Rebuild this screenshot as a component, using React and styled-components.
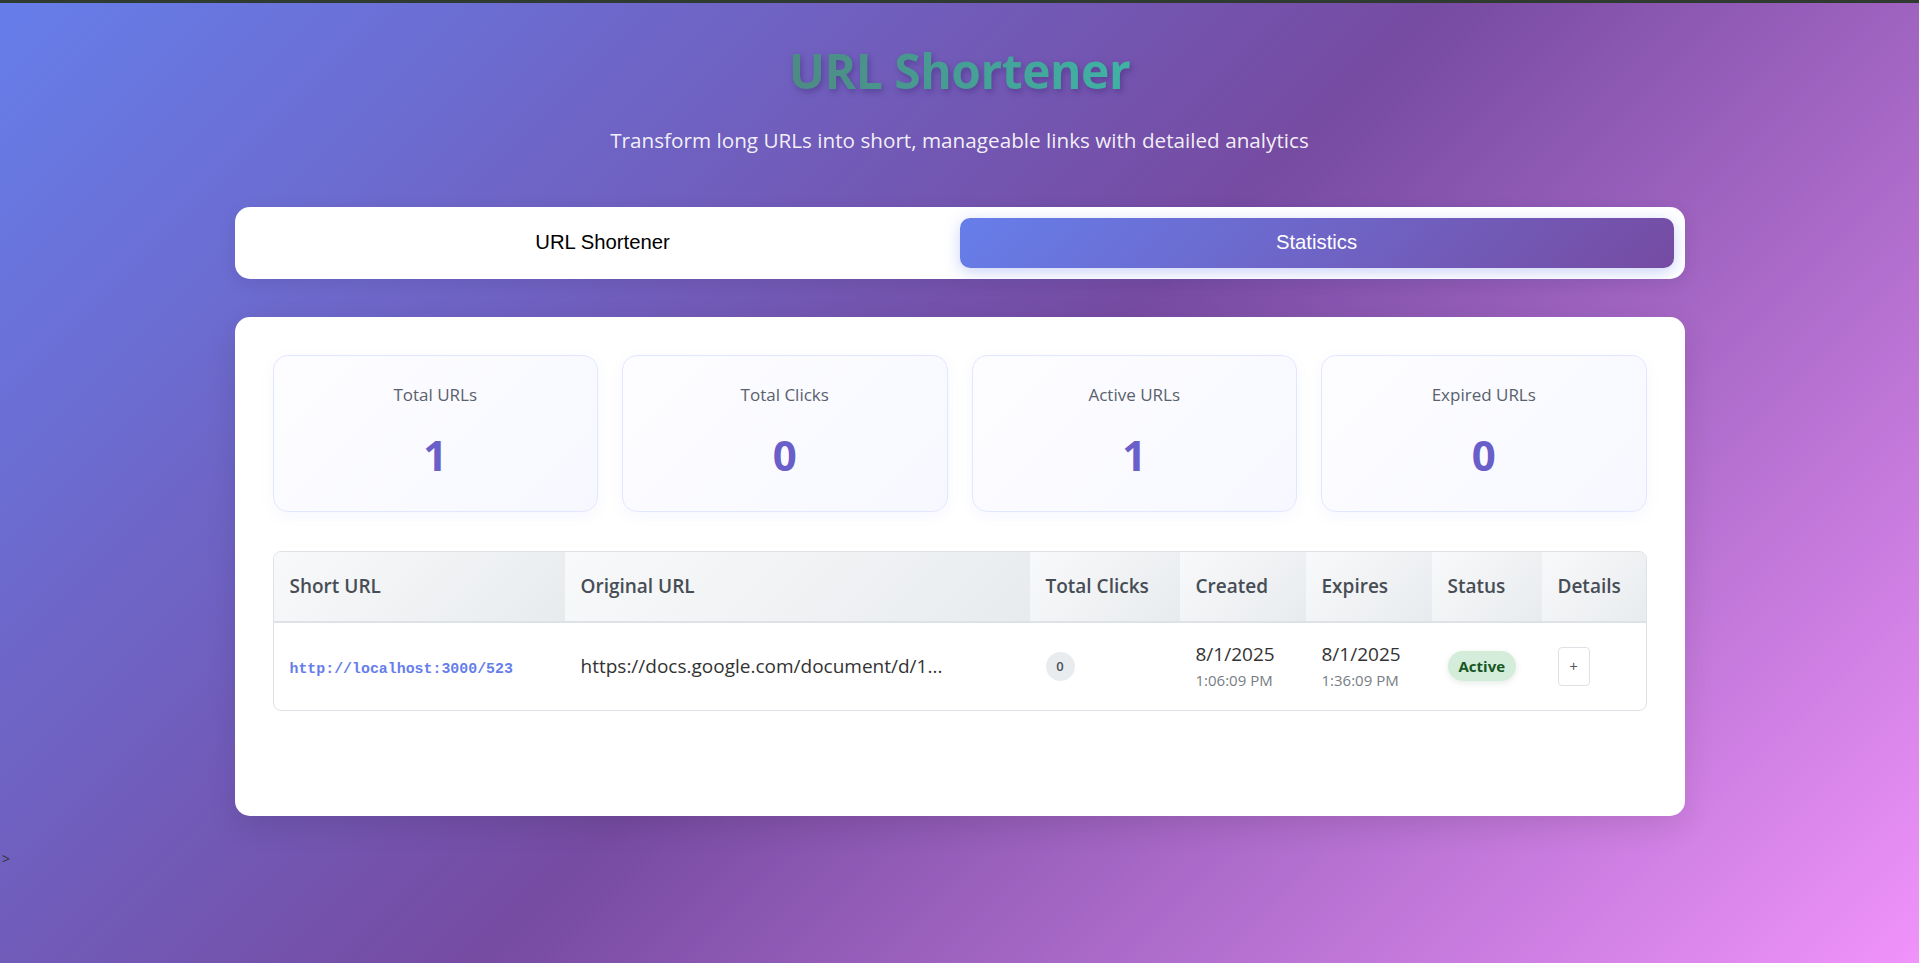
import React, { useState } from 'react';
import styled, { createGlobalStyle } from 'styled-components';

// 페이지 전체 기본 스타일
const GlobalStyle = createGlobalStyle`
  * { box-sizing: border-box; }
  html, body { margin: 0; padding: 0; }
  body {
    min-height: 100vh;
    font-family: "Open Sans", "Noto Sans", "Liberation Sans", sans-serif;
    background: linear-gradient(135deg, #667eea 0%, #764ba2 50%, #f093fb 100%);
    background-attachment: fixed;
  }
`;

const TopStrip = styled.div`
  height: 3px;
  background: #2f3a30;
`;

const Container = styled.div`
  max-width: 1450px;
  margin: 0 auto;
  padding: 39px 0 33px;
`;

const Header = styled.header`
  text-align: center;
  margin-bottom: 53px;
`;

const Title = styled.h1`
  margin: 0;
  font-size: 48px;
  font-weight: 700;
  line-height: 1.2;
  letter-spacing: -0.5px;
  background: linear-gradient(90deg, #4d8a84 0%, #3fb3a5 100%);
  -webkit-background-clip: text;
  background-clip: text;
  color: transparent;
  filter: drop-shadow(2px 3px 3px rgba(40, 20, 90, 0.35));
  display: inline-block;
`;

const Subtitle = styled.p`
  margin: 26px 0 0;
  font-size: 20.7px;
  color: rgba(255, 255, 255, 0.92);
`;

const Tabs = styled.div`
  display: flex;
  background: #fff;
  border-radius: 15px;
  padding: 11px;
  margin-bottom: 38px;
  box-shadow: 0 4px 18px rgba(0, 0, 0, 0.08);
`;

const TabButton = styled.button`
  flex: 1;
  height: 50px;
  border: none;
  border-radius: 10px;
  font-family: "Liberation Sans", Arial, sans-serif;
  font-size: 20.3px;
  cursor: pointer;
  color: ${p => (p.$active ? '#fff' : '#000')};
  background: ${p => (p.$active ? 'linear-gradient(135deg, #667eea 0%, #764ba2 100%)' : 'transparent')};
  box-shadow: ${p => (p.$active ? '0 4px 15px rgba(102, 126, 234, 0.35)' : 'none')};
`;

const Panel = styled.section`
  background: #fff;
  border-radius: 15px;
  padding: 38px;
  min-height: 499px;
  box-shadow: 0 10px 30px rgba(0, 0, 0, 0.1);
`;

const StatsGrid = styled.div`
  display: grid;
  grid-template-columns: repeat(4, 1fr);
  gap: 24px;
  margin-bottom: 39px;
`;

const StatCard = styled.div`
  height: 157px;
  padding: 26px 20px;
  text-align: center;
  border-radius: 15px;
  border: 1px solid #e3e6ff;
  background: linear-gradient(135deg, #fdfdff 0%, #f7f8ff 100%);
  box-shadow: 0 4px 15px rgba(102, 126, 234, 0.06);
`;

const StatLabel = styled.div`
  font-size: 17px;
  line-height: 26px;
  color: #59616d;
  margin-bottom: 20px;
`;

const StatValue = styled.div`
  font-size: 42px;
  line-height: 54px;
  font-weight: 700;
  color: #6a5ec9;
`;

const TableWrap = styled.div`
  border: 1px solid #dee2e6;
  border-radius: 8px;
  overflow: hidden;
`;

const Table = styled.table`
  width: 100%;
  border-collapse: collapse;
  table-layout: fixed;
`;

const Th = styled.th`
  width: ${p => p.$w}px;
  height: 70px;
  padding: 0 12px 0 16px;
  text-align: left;
  font-size: 19px;
  font-weight: 600;
  color: #474d55;
  background: linear-gradient(135deg, #f8f9fa 0%, #e8ebee 100%);
  border-bottom: 2px solid #dee2e6;
  white-space: nowrap;
`;

const Td = styled.td`
  height: 88px;
  padding: 0 12px 0 16px;
  vertical-align: middle;
  font-size: 19px;
  color: #333;
  white-space: nowrap;
  overflow: hidden;
`;

const ShortLink = styled.a`
  font-family: "Liberation Mono", "DejaVu Sans Mono", monospace;
  font-size: 14.9px;
  font-weight: 700;
  color: #667eea;
  text-decoration: none;
`;

const ClickBadge = styled.span`
  display: inline-flex;
  align-items: center;
  justify-content: center;
  width: 29px;
  height: 29px;
  border-radius: 50%;
  background: #e9ecef;
  color: #495057;
  font-size: 13px;
  font-weight: 600;
`;

const DateMain = styled.div`
  font-size: 19px;
  line-height: 28px;
  color: #333;
`;

const DateTime = styled.div`
  font-size: 15px;
  line-height: 24px;
  color: #777d84;
`;

const StatusBadge = styled.span`
  display: inline-block;
  padding: 5px 11px;
  border-radius: 16px;
  font-size: 15px;
  font-weight: 700;
  background: #d4edda;
  color: #155724;
  box-shadow: 0 2px 6px rgba(21, 87, 36, 0.12);
`;

const DetailButton = styled.button`
  width: 32px;
  height: 39px;
  border: 1px solid #dee2e6;
  border-radius: 4px;
  background: #fff;
  color: #555;
  font-size: 14px;
  cursor: pointer;
`;

const Stray = styled.div`
  padding-left: 2px;
  font-size: 14px;
  color: #333;
`;

const stats = [
  { label: 'Total URLs', value: 1 },
  { label: 'Total Clicks', value: 0 },
  { label: 'Active URLs', value: 1 },
  { label: 'Expired URLs', value: 0 },
];

const columns = [
  ['Short URL', 291],
  ['Original URL', 465],
  ['Total Clicks', 150],
  ['Created', 126],
  ['Expires', 126],
  ['Status', 110],
  ['Details', 106],
];

export default function App() {
  let [tab, setTab] = useState('stats');

  return (
    <>
      <GlobalStyle />
      <TopStrip />
      <Container>
        <Header>
          <Title>URL Shortener</Title>
          <Subtitle>Transform long URLs into short, manageable links with detailed analytics</Subtitle>
        </Header>

        <Tabs>
          <TabButton $active={tab === 'short'} onClick={() => setTab('short')}>URL Shortener</TabButton>
          <TabButton $active={tab === 'stats'} onClick={() => setTab('stats')}>Statistics</TabButton>
        </Tabs>

        <Panel>
          <StatsGrid>
            {stats.map(s => (
              <StatCard key={s.label}>
                <StatLabel>{s.label}</StatLabel>
                <StatValue>{s.value}</StatValue>
              </StatCard>
            ))}
          </StatsGrid>

          <TableWrap>
            <Table>
              <thead>
                <tr>
                  {columns.map(([name, w]) => (
                    <Th key={name} $w={w}>{name}</Th>
                  ))}
                </tr>
              </thead>
              <tbody>
                <tr>
                  <Td><ShortLink href="#">http://localhost:3000/523</ShortLink></Td>
                  <Td>https://docs.google.com/document/d/1...</Td>
                  <Td><ClickBadge>0</ClickBadge></Td>
                  <Td>
                    <DateMain>8/1/2025</DateMain>
                    <DateTime>1:06:09 PM</DateTime>
                  </Td>
                  <Td>
                    <DateMain>8/1/2025</DateMain>
                    <DateTime>1:36:09 PM</DateTime>
                  </Td>
                  <Td><StatusBadge>Active</StatusBadge></Td>
                  <Td><DetailButton>+</DetailButton></Td>
                </tr>
              </tbody>
            </Table>
          </TableWrap>
        </Panel>
      </Container>
      <Stray>&gt;</Stray>
    </>
  );
}
